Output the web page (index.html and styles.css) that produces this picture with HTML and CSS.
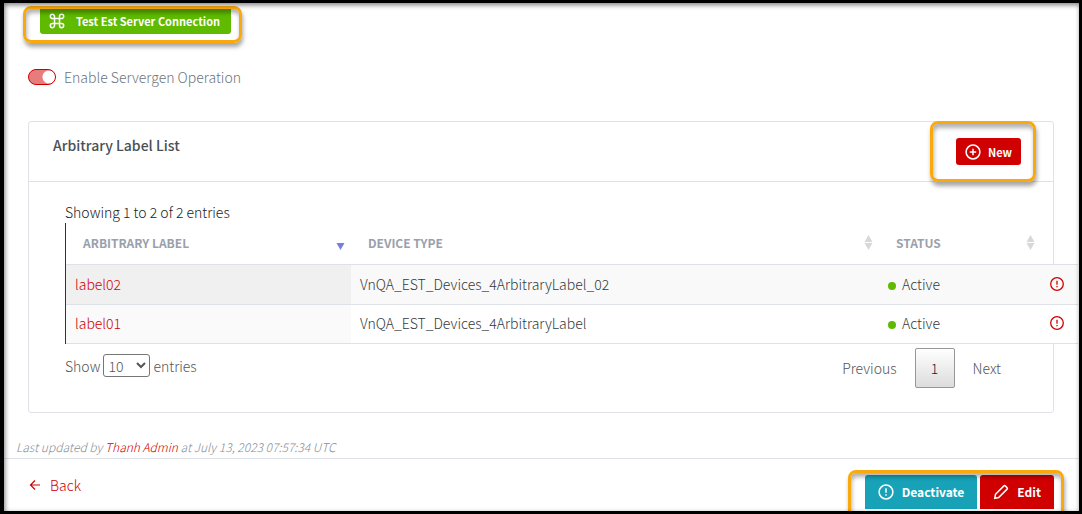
FILE: index.html
```html
<!DOCTYPE html>
<html lang="en">
<head>
    <meta charset="UTF-8">
    <title>Arbitrary Label List</title>
    <link rel="stylesheet" href="styles.css">
</head>
<body>
<div class="page">
    <main class="content">
        <div class="toolbar">
            <div class="highlight highlight-test">
                <button class="btn btn-success" type="button">
                    <svg class="icon" viewBox="0 0 16 16"><path d="M5.500 5.500h5v5h-5zM5.500 5.500V3.400a2.100 2.100 0 1 0-2.100 2.100zM10.500 5.500h2.100a2.100 2.100 0 1 0-2.100-2.100zM10.500 10.500v2.100a2.100 2.100 0 1 0 2.100-2.100zM5.500 10.500H3.400a2.100 2.100 0 1 0 2.100 2.100z"/></svg>
                    Test Est Server Connection
                </button>
            </div>
        </div>
        <label class="switch">
            <input type="checkbox" checked>
            Enable Servergen Operation
        </label>

        <section class="card">
            <div class="card-header">
                <h2>Arbitrary Label List</h2>
                <div class="highlight highlight-new">
                    <button class="btn btn-danger" type="button">
                        <svg class="icon" viewBox="0 0 16 16"><circle cx="8" cy="8" r="6.900"/><path d="M8 4.800v6.400M4.800 8h6.400"/></svg>
                        New
                    </button>
                </div>
            </div>
            <div class="card-body">
                <div class="table-info">Showing 1 to 2 of 2 entries</div>
                <div class="table-wrap">
                    <table>
                        <colgroup>
                            <col class="col-label">
                            <col>
                            <col class="col-status">
                            <col class="col-action">
                        </colgroup>
                        <thead>
                            <tr>
                                <th><div class="th-inner">Arbitrary Label <svg class="sort sort-desc" viewBox="0 0 8 16"><path d="M0 8h8l-4 7z"/></svg></div></th>
                                <th><div class="th-inner">Device Type <svg class="sort" viewBox="0 0 8 16"><path d="M4 0l4 7H0zM0 8h8l-4 7z"/></svg></div></th>
                                <th><div class="th-inner">Status <svg class="sort" viewBox="0 0 8 16"><path d="M4 0l4 7H0zM0 8h8l-4 7z"/></svg></div></th>
                                <th></th>
                            </tr>
                        </thead>
                        <tbody>
                            <tr>
                                <td><a href="#">label02</a></td>
                                <td>VnQA_EST_Devices_4ArbitraryLabel_02</td>
                                <td><span class="dot"></span>Active</td>
                                <td><a class="row-action" href="#" aria-label="Deactivate label02"><svg viewBox="0 0 14 14"><circle cx="7" cy="7" r="6.300"/><path d="M7 3.700v4M7 9v1.300"/></svg></a></td>
                            </tr>
                            <tr>
                                <td><a href="#">label01</a></td>
                                <td>VnQA_EST_Devices_4ArbitraryLabel</td>
                                <td><span class="dot"></span>Active</td>
                                <td><a class="row-action" href="#" aria-label="Deactivate label01"><svg viewBox="0 0 14 14"><circle cx="7" cy="7" r="6.300"/><path d="M7 3.700v4M7 9v1.300"/></svg></a></td>
                            </tr>
                        </tbody>
                    </table>
                </div>
                <div class="table-footer">
                    <label class="length">Show
                        <select>
                            <option>10</option>
                            <option>25</option>
                            <option>50</option>
                        </select>
                        entries</label>
                    <nav class="pagination">
                        <a href="#">Previous</a>
                        <a class="current" href="#">1</a>
                        <a href="#">Next</a>
                    </nav>
                </div>
            </div>
        </section>
    </main>

    <p class="updated">Last updated by <a href="#">Thanh Admin</a> at July 13, 2023 07:57:34 UTC</p>

    <footer class="footer">
        <a class="back" href="#">
            <svg viewBox="0 0 12 12"><path d="M11 6H1.500M6 1.500L1.500 6 6 10.500"/></svg>
            Back
        </a>
        <div class="highlight highlight-actions">
            <button class="btn btn-lg btn-info" type="button">
                <svg class="icon" viewBox="0 0 16 16"><circle cx="8" cy="8" r="6.900"/><path d="M8 4.300v4.500M8 10.200v1.600"/></svg>
                Deactivate
            </button>
            <button class="btn btn-lg btn-danger" type="button">
                <svg class="icon" viewBox="0 0 16 16"><path d="M1.800 14.200l.7-3.900 8.400-8.400a1 1 0 0 1 1.400 0l1.800 1.800a1 1 0 0 1 0 1.400l-8.400 8.400z"/></svg>
                Edit
            </button>
        </div>
    </footer>
</div>
</body>
</html>
```
FILE: styles.css
```css
*{
    box-sizing: border-box;
}
body{
    margin: 0;
    font-family: "Noto Sans CJK SC", "Noto Sans", sans-serif;
    font-size: 14px;
    font-weight: 300;
    line-height: 20px;
    color: #343a40;
    background-color: #fff;
}
a{
    color: #d00000;
    text-decoration: none;
}
svg{
    display: block;
    flex: none;
    fill: none;
    stroke: currentColor;
}
.page{
    position: relative;
    display: flex;
    flex-direction: column;
    min-height: 100vh;
    border: solid #000;
    border-width: 3px 3px 3px 4px;
    overflow: hidden;
}
/* soft edge inside the black frame */
.page::after{
    content: "";
    position: absolute;
    inset: 0;
    box-shadow: inset 1px 2px 5px rgba(0,0,0,.5);
    pointer-events: none;
}
.content{
    padding: 5px 25px 0 24px;
}
.toolbar{
    display: flex;
    padding-left: 12px;
}

/* buttons */
.btn{
    display: flex;
    align-items: center;
    gap: 7px;
    height: 27px;
    padding: 0 9px;
    border: 0;
    border-radius: 3px;
    font-family: inherit;
    font-size: 11px;
    font-weight: bold;
    line-height: 18px;
    color: #fff;
    cursor: pointer;
}
.btn-lg{
    gap: 8px;
    height: 34px;
    padding: 0 13px;
    border-radius: 3px 3px 0 0;
    font-size: 12px;
}
.btn-success{
    gap: 11px;
    height: 26px;
    padding-right: 11px;
    border-radius: 0 0 3px 3px;
    background-color: #5fba00;
}
.btn-danger{
    background-color: #d00000;
}
.btn-info{
    background-color: #17a2b8;
}
.icon{
    width: 16px;
    height: 16px;
    stroke-width: 1.5;
}

/* orange callout drawn around a control */
.highlight{
    position: relative;
    display: flex;
    gap: 3px;
}
.highlight::after{
    content: "";
    position: absolute;
    border: 3px solid #f9a90b;
    border-radius: 8px;
    box-shadow: 1px 4px 4px rgba(0,0,0,.35), inset 1px 4px 4px rgba(0,0,0,.3);
    pointer-events: none;
}
.highlight-test::after{
    inset: -2px -11px -9px -17px;
}
.highlight-new::after{
    inset: -17px -15px -17px -26px;
}
.highlight-actions::after{
    inset: -5px -10px -10px -17px;
}

.switch{
    display: flex;
    align-items: center;
    gap: 8px;
    margin: 33px 0 34px;
    color: #6c757d;
}
.switch input{
    appearance: none;
    width: 28px;
    height: 16px;
    margin: 0;
    border: 1px solid #d00000;
    border-radius: 8px;
    background: radial-gradient(circle at 20px 7px, #fff 6px, transparent 7px) #e87c7c;
}

/* card */
.card{
    border: 1px solid #dfe2e9;
    border-radius: 3px;
}
.card-header{
    display: flex;
    justify-content: space-between;
    padding: 16px 32px 16px 24px;
    border-bottom: 1px solid #dfe2e9;
}
.card-header h2{
    margin: 0;
    font-size: 14px;
    font-weight: 500;
    line-height: 14px;
    color: #495057;
}
.card-body{
    padding: 20px 36px 24px;
}
.table-info{
    color: #222;
    line-height: 21px;
}
.table-wrap{
    margin-right: -61px;
    border-left: 1px solid #333;
}
table{
    width: 100%;
    table-layout: fixed;
    border-collapse: separate;
    border-spacing: 0;
}
.col-label{
    width: 285px;
}
.col-status{
    width: 162px;
}
.col-action{
    width: 37px;
}
th{
    height: 42px;
    padding: 0 6px 2px 17px;
    border-bottom: 1px solid #dee2e6;
    font-size: 12px;
    font-weight: bold;
    text-align: left;
    text-transform: uppercase;
    color: #9aa0ac;
}
.th-inner{
    display: flex;
    align-items: center;
    justify-content: space-between;
}
.sort{
    width: 9px;
    height: 16px;
    fill: #d8d8d8;
    stroke: none;
}
.sort-desc{
    fill: #7a7de0;
}
td{
    height: 39px;
    padding: 0 9px 2px;
    border-bottom: 1px solid #dee2e6;
    background-color: #fff;
}
td:first-child{
    background-color: #fafafa;
}
tbody tr:first-child td{
    height: 40px;
    background-color: #f9f9f9;
}
tbody tr:first-child td:first-child{
    background-color: #f0f0f0;
}
.dot{
    display: inline-block;
    width: 8px;
    height: 8px;
    margin-right: 6px;
    border-radius: 50%;
    background-color: #5fba00;
}
.row-action svg{
    width: 14px;
    height: 14px;
    stroke-width: 1.3;
}
.table-footer{
    display: flex;
    justify-content: space-between;
    align-items: flex-start;
    padding-top: 4px;
    color: #555;
}
.length{
    display: flex;
    align-items: center;
    gap: 3px;
    padding-top: 6px;
}
.length select{
    width: 47px;
    height: 23px;
    padding: 0;
    border: 1px solid #767676;
    border-radius: 3px;
    font-family: inherit;
    font-size: 14px;
    font-weight: inherit;
    color: #555;
    background-color: #fff;
}
.pagination{
    display: flex;
    gap: 2px;
}
.pagination a{
    min-width: 40px;
    padding: 9px 15px;
    border: 1px solid transparent;
    border-radius: 2px;
    text-align: center;
    color: #555;
}
.pagination a.current{
    border-color: #979797;
    color: #222;
    background: linear-gradient(#fff, #dcdcdc);
}

.updated{
    margin: auto 0 1px;
    padding: 0 12px;
    font-size: 12px;
    font-style: italic;
    color: #868e9a;
}
.footer{
    display: flex;
    justify-content: space-between;
    padding: 16px 25px 2px;
    border-top: 1px solid #dfe2e9;
}
.back{
    display: flex;
    align-items: center;
    align-self: flex-start;
    gap: 9px;
}
.back svg{
    width: 12px;
    height: 12px;
    stroke-width: 1.2;
}
```
